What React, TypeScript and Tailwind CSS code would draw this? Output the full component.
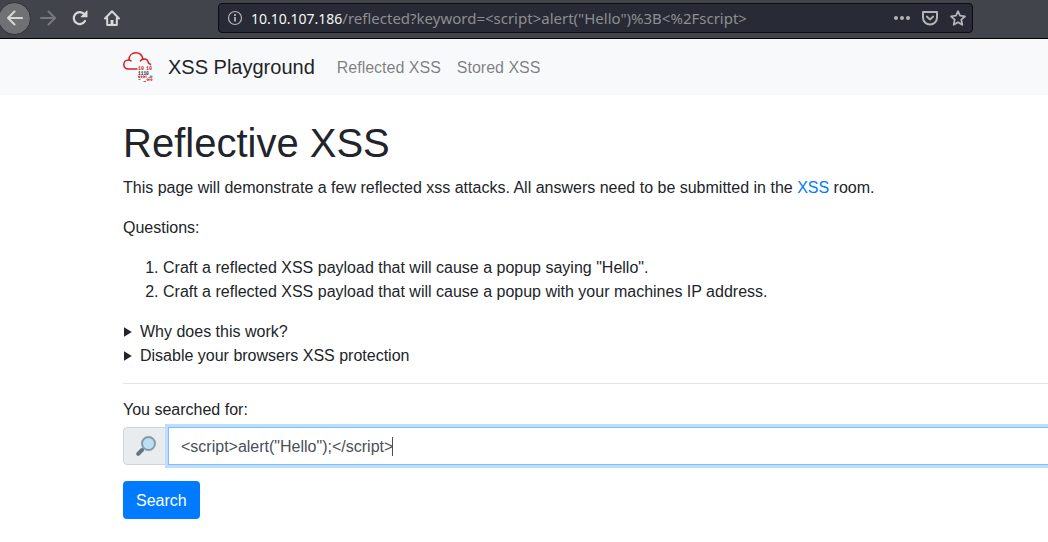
import { useState } from "react";

function BackIcon() {
  return (
    <svg viewBox="0 0 16 16" className="size-4" fill="none" stroke="currentColor" strokeWidth="2" strokeLinecap="round" strokeLinejoin="round">
      <path d="M15 8H1.5M7.5 1.5 1 8l6.500 6.500" />
    </svg>
  );
}

function ForwardIcon() {
  return (
    <svg viewBox="0 0 16 16" className="size-4" fill="none" stroke="currentColor" strokeWidth="2" strokeLinecap="round" strokeLinejoin="round">
      <path d="M1 8h13.500M8.500 1.500 15 8l-6.500 6.500" />
    </svg>
  );
}

function ReloadIcon() {
  return (
    <svg viewBox="0 0 16 16" className="size-4" fill="none">
      <path d="M13 11a6 6 0 1 1-.6-6.800" stroke="currentColor" strokeWidth="2.200" strokeLinecap="round" />
      <path d="M15.500 1v6.300H9.200a.5.5 0 0 1-.35-.85L14.650.65a.5.5 0 0 1 .85.35z" fill="currentColor" />
    </svg>
  );
}

function HomeIcon() {
  return (
    <svg viewBox="0 0 16 16" className="size-4" fill="none" stroke="currentColor" strokeWidth="2" strokeLinecap="round" strokeLinejoin="round">
      <path d="M1 8.500 8 1.300l7 7.200M3.200 8v7h9.600V8" />
      <path d="M8 15v-5" strokeWidth="3" strokeLinecap="butt" />
    </svg>
  );
}

function InfoIcon() {
  return (
    <svg viewBox="0 0 16 16" className="size-4" fill="none" stroke="currentColor">
      <circle cx="8" cy="8" r="6.500" strokeWidth="1.200" />
      <path d="M8 7v4.500" strokeWidth="1.800" />
      <path d="M8 4v1.900" strokeWidth="1.800" />
    </svg>
  );
}

function DotsIcon() {
  return (
    <svg viewBox="0 0 16 16" className="size-4" fill="currentColor">
      <circle cx="2" cy="8" r="2" />
      <circle cx="8" cy="8" r="2" />
      <circle cx="14" cy="8" r="2" />
    </svg>
  );
}

function PocketIcon() {
  return (
    <svg viewBox="0 0 16 16" className="size-4" fill="none" stroke="currentColor" strokeLinecap="round" strokeLinejoin="round">
      <path d="M1 2h14v5.500a7 7 0 0 1-14 0z" strokeWidth="2" />
      <path d="m4.800 6.500 3.200 3 3.200-3" strokeWidth="1.800" />
    </svg>
  );
}

function StarIcon() {
  return (
    <svg viewBox="0 0 16 16" className="size-4" fill="none" stroke="currentColor" strokeWidth="1.800" strokeLinejoin="round">
      <path d="m8 1.200 2 4.500 5 .6-3.700 3.300 1 5.200L8 12.200l-4.300 2.600 1-5.200L1 6.300l5-.6z" />
    </svg>
  );
}

function CloudLogo() {
  return (
    <svg viewBox="0 0 30 30" className="size-[30px]" fill="none" aria-hidden="true">
      <path
        d="M14 17H5.300C2.600 17 .8 15 .8 12.500 .8 10 2.700 8 5.300 8c1 0 1.900.3 2.700.9M5.800 7.900C6.100 3.700 9 .8 12.800.8c3.700 0 6.500 2.500 7 6.300M17.400 8.900c.9-1.400 2.200-2 3.700-2 2.500 0 4.100 1.700 4.300 4.100 1 .2 1.700.8 2.100 1.800"
        stroke="#d21f26"
        strokeWidth="1.500"
        strokeLinecap="round"
      />
      <g fontFamily="Liberation Mono, monospace" fontWeight="700">
        <text x="15" y="17.500" fontSize="5" fill="#c8232b">10</text>
        <text x="23" y="17.500" fontSize="5" fill="#c8232b">10</text>
        <text x="15" y="22.500" fontSize="4.500" fill="#24282e">1110</text>
      </g>
      <path d="M15.500 24h1.500v1.500h-1.500zM18.500 23.500v2.500M20 24h1.500v1.500H20zM23 23.500V26M24 27h1.500v1.300H24zM26.800 26.500v2.200M28 27h1v1.300h-1zM20.500 29.500H23" stroke="#d4474e" strokeWidth="1" />
      <path d="M25.500 25.500h1M27.300 23.500V26M28.800 23.500V26M15.500 27.300h2" stroke="#656b73" strokeWidth="1" />
    </svg>
  );
}

function MagnifierIcon() {
  return (
    <svg viewBox="0 0 20 20" className="size-5" fill="none">
      <path d="m8.500 11.500-3 3" stroke="#8899a6" strokeWidth="2" />
      <path d="m6 14-3.800 3.800" stroke="#66757f" strokeWidth="4" strokeLinecap="round" />
      <circle cx="12.500" cy="7.500" r="6.500" fill="#bbddf5" stroke="#8899a6" strokeWidth="2" />
    </svg>
  );
}

function BrowserBar() {
  return (
    <header className="flex h-[39px] items-center border-b border-black bg-[#42444b] pb-[2px] text-[#d7d7d8]">
      <button type="button" aria-label="Back" className="-ml-[2px] flex size-[33px] shrink-0 items-center justify-center rounded-full border border-[#2f3137] bg-[#707175]">
        <BackIcon />
      </button>
      <button type="button" aria-label="Forward" disabled className="ml-[9px] shrink-0 text-[#77797e]">
        <ForwardIcon />
      </button>
      <button type="button" aria-label="Reload" className="ml-4 shrink-0">
        <ReloadIcon />
      </button>
      <button type="button" aria-label="Home" className="ml-4 shrink-0">
        <HomeIcon />
      </button>
      <div className="mr-[75px] ml-[98px] flex h-[30px] min-w-0 flex-1 items-center rounded border border-[#0c0d12] bg-[#282a36] pr-[6px] pl-2 text-[#b3b4b8]">
        <button type="button" aria-label="Site information" className="shrink-0">
          <InfoIcon />
        </button>
        <div
          role="textbox"
          aria-label="Address"
          contentEditable
          suppressContentEditableWarning
          spellCheck={false}
          className="ml-2 min-w-0 flex-1 truncate font-['Noto_Sans',sans-serif] text-[15px] leading-5 text-[#8d8e93] outline-none"
        >
          <span className="text-sm text-[#f8f8f2]">10.10.107.186</span>
          {'/reflected?keyword=<script>alert("Hello")%3B<%2Fscript>'}
        </div>
        <div className="flex shrink-0 items-center gap-3">
          <button type="button" aria-label="Page actions"><DotsIcon /></button>
          <button type="button" aria-label="Save to Pocket"><PocketIcon /></button>
          <button type="button" aria-label="Bookmark"><StarIcon /></button>
        </div>
      </div>
    </header>
  );
}

function Disclosure({ title, children }: { title: string; children: string }) {
  const [open, setOpen] = useState(false);
  return (
    <details className="group" onToggle={(event) => setOpen(event.currentTarget.open)}>
      <summary className="flex cursor-pointer list-none items-center gap-2">
        <svg viewBox="0 0 9 10" className="h-[10px] w-[9px] group-open:rotate-90" fill="currentColor">
          <path d="M1 0.300 8.800 5 1 9.700z" />
        </svg>
        {title}
      </summary>
      {open && <p>{children}</p>}
    </details>
  );
}

export default function App() {
  const [keyword, setKeyword] = useState('<script>alert("Hello");</script>');
  const [typed, setTyped] = useState(false);

  return (
    <div className="min-h-screen overflow-x-hidden bg-white font-['Liberation_Sans',Arial,sans-serif] text-base text-[#212529]">
      <BrowserBar />
      <nav className="flex h-14 items-center bg-[#f8f9fa] pl-[123px]">
        <a href="#home" className="flex items-center gap-[15px] text-xl text-[#212529]">
          <CloudLogo />
          XSS Playground
        </a>
        <div className="ml-[22px] flex gap-4 pt-[2px] text-black/50">
          <a href="#reflected">Reflected XSS</a>
          <a href="#stored">Stored XSS</a>
        </div>
      </nav>
      <main className="pt-6 pl-[123px]">
        <h1 className="mb-[9px] text-[40px] leading-[48px]">Reflective XSS</h1>
        <p className="mb-4">
          This page will demonstrate a few reflected xss attacks. All answers need to be submitted in the{" "}
          <a href="#room" className="text-[#007bff]">XSS</a> room.
        </p>
        <p className="mb-4">Questions:</p>
        <ol className="mb-4 list-decimal pl-10">
          <li>Craft a reflected XSS payload that will cause a popup saying "Hello".</li>
          <li>Craft a reflected XSS payload that will cause a popup with your machines IP address.</li>
        </ol>
        <Disclosure title="Why does this work?">The keyword is written into the page unescaped.</Disclosure>
        <Disclosure title="Disable your browsers XSS protection">Turn off the XSS filter in your browser settings.</Disclosure>
        <hr className="mt-[15px] mb-[14px] border-[#e5e5e5]" />
        <form onSubmit={(event) => event.preventDefault()}>
          <label htmlFor="keyword" className="mb-[5px] block">You searched for:</label>
          <div className="mb-4 flex">
            <span className="flex h-[38px] w-[46px] shrink-0 items-center justify-center rounded-l border border-[#ced4da] bg-[#e9ecef]">
              <MagnifierIcon />
            </span>
            <div className="relative -ml-px min-w-0 flex-1">
              <input
                id="keyword"
                type="text"
                value={keyword}
                onChange={(event) => {
                  setKeyword(event.target.value);
                  setTyped(true);
                }}
                className="block h-[38px] w-full border border-r-0 border-[#80bdff] bg-white px-3 pt-[2px] text-[#495057] shadow-[0_0_0_3px_#bfdeff] outline-none"
              />
              {!typed && <span className="pointer-events-none absolute top-[10px] left-[224px] h-[19px] w-px bg-[#495057]" />}
            </div>
          </div>
          <button type="submit" className="h-[38px] rounded bg-[#007bff] px-[13px] pt-[2px] text-white">Search</button>
        </form>
      </main>
    </div>
  );
}
